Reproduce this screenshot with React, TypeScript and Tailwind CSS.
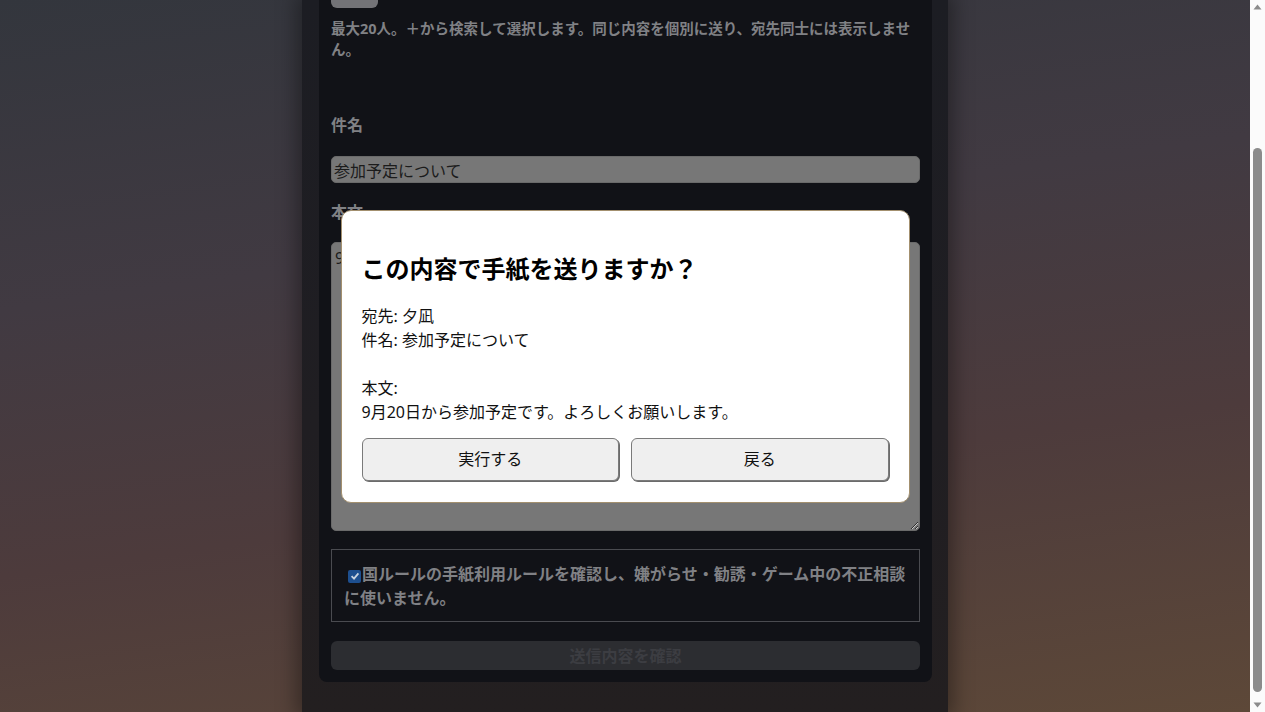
import React from "react";

const font = "font-['Noto_Sans','Noto_Sans_CJK_JP',sans-serif]";

function Scrollbar() {
  return (
    <div className="w-[15px] h-full bg-[#fbfbfb] flex flex-col items-center shrink-0">
      <svg width="15" height="14" viewBox="0 0 15 14" className="shrink-0">
        <path d="M3.5 9.5 L7.5 4.5 L11.5 9.5 Z" fill="#8b8b8b" />
      </svg>
      <div className="flex-1 w-full flex flex-col items-center">
        <div className="mt-[134px] w-[9px] h-[544px] rounded-full bg-[#8b8b8b]" />
      </div>
      <svg width="15" height="14" viewBox="0 0 15 14" className="shrink-0">
        <path d="M3.5 4.5 L7.5 9.5 L11.5 4.5 Z" fill="#8b8b8b" />
      </svg>
    </div>
  );
}

function ConfirmDialog() {
  return (
    <div className="absolute inset-0 flex items-center justify-center">
      <div className="w-[569px] bg-white border border-[#a3906f] rounded-[10px] px-5 pt-5 pb-[21px] text-[#111]">
        <h2 className="mt-5 mb-[17px] text-[24px] leading-[36px] font-bold text-black">
          この内容で手紙を送りますか？
        </h2>
        <p className="text-[16px] leading-[24px] whitespace-pre-wrap">
          {"宛先: 夕凪\n件名: 参加予定について\n\n本文:\n9月20日から参加予定です。よろしくお願いします。"}
        </p>
        <div className="mt-[14px] grid grid-cols-2 gap-3">
          <button className="h-[43px] rounded-md bg-[#efefef] border border-[#7a7a7a] shadow-[1px_1px_0_#6b6b6b] text-[16px] text-[#111]">
            実行する
          </button>
          <button className="h-[43px] rounded-md bg-[#efefef] border border-[#7a7a7a] shadow-[1px_1px_0_#6b6b6b] text-[16px] text-[#111]">
            戻る
          </button>
        </div>
      </div>
    </div>
  );
}

export default function App() {
  const body = "9月20日から参加予定です。よろしくお願いします。";
  return (
    <div className={`${font} h-[712px] w-full flex overflow-hidden`}>
      <div className="relative flex-1 h-full bg-[linear-gradient(172deg,#33363d_0%,#413a42_35%,#4d3b3c_65%,#5d4838_100%)] flex justify-center">
        {/* letter form column */}
        <div className="w-[646px] h-full bg-[linear-gradient(180deg,#1c1d23_0%,#201e22_60%,#231f20_100%)] shadow-[0_0_18px_6px_rgba(0,0,0,0.35)] px-[17px] pr-[16px]">
          <div className="bg-[#111217] rounded-b-lg px-3 pb-3 text-[#808185]">
            <div className="h-2 w-[47px] rounded-b-md bg-[#737377]" />
            <p className="mt-[10px] text-[14.5px] leading-[21px] font-bold">
              <span className="whitespace-nowrap">最大20人。＋から検索して選択します。同じ内容を個別に送り、宛先同士には表示しませ</span>
              <br />
              ん。
            </p>
            <div className="mt-[55px] text-[16px] leading-[21px] font-bold">件名</div>
            <input
              readOnly
              value="参加予定について"
              className="mt-[20px] block w-full h-[27px] rounded-[5px] bg-[#777] border border-[#6a6a6a] pl-[2px] text-[16px] text-[#1b1b1b] outline-none"
            />
            <div className="mt-[19px] text-[16px] leading-[21px] font-bold">本文</div>
            <textarea
              readOnly
              value={body}
              className="mt-[19px] block w-full h-[289px] rounded-[5px] bg-[#777] border border-[#6a6a6a] px-[3px] py-[4px] text-[16px] leading-[22px] text-[#1b1b1b] outline-none resize-y"
            />
            <div className="mt-[18px] border border-[#4a4b50] pl-3 pr-[10px] pt-[12px] pb-[11px] text-[16px] leading-[24px] font-bold">
              <span className="inline-flex align-[-1px] items-center justify-center ml-[4px] mr-[1px] w-[13px] h-[13px] rounded-[2px] bg-[#1d4f8f]">
                <svg width="10" height="10" viewBox="0 0 10 10">
                  <path d="M1.6 5.2 L4 7.6 L8.4 2.4" stroke="#c9d3df" strokeWidth="1.8" fill="none" />
                </svg>
              </span>
              国ルールの手紙利用ルールを確認し、嫌がらせ・勧誘・ゲーム中の不正相談に使いません。
            </div>
            <button className="mt-[19px] w-full h-[29px] rounded-md bg-[#2c2d31] text-[16px] font-bold text-[#3c3d42]">
              送信内容を確認
            </button>
          </div>
        </div>
        <ConfirmDialog />
      </div>
      <Scrollbar />
    </div>
  );
}
